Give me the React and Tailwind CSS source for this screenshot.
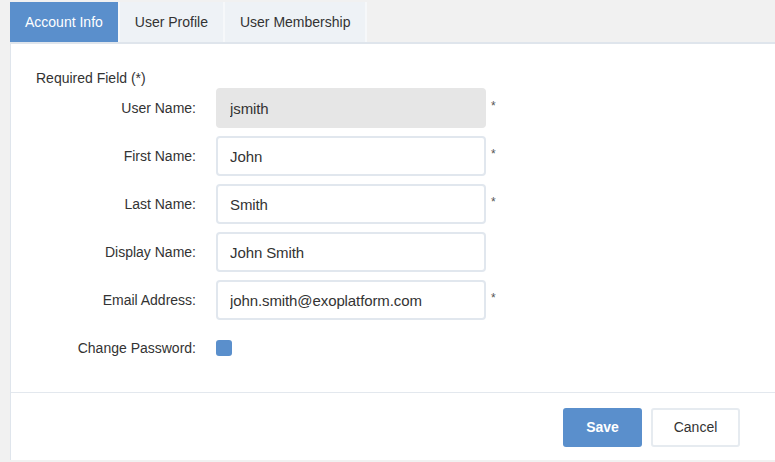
import { useState } from 'react';

const TABS = ['Account Info', 'User Profile', 'User Membership'];

const FIELDS = [
  { label: 'User Name:', value: 'jsmith', disabled: true, required: true },
  { label: 'First Name:', value: 'John', required: true },
  { label: 'Last Name:', value: 'Smith', required: true },
  { label: 'Display Name:', value: 'John Smith' },
  { label: 'Email Address:', value: 'john.smith@exoplatform.com', required: true },
];

export default function App() {
  const [active, setActive] = useState(0);

  return (
    <div className="min-h-screen bg-[#f1f1f1] pl-[10px] pt-[2px] font-['Liberation_Sans',Arial,sans-serif] text-[#333]">
      {/* Tabs */}
      <div className="flex h-[40px]">
        {TABS.map((t, i) => (
          <button
            key={t}
            onClick={() => setActive(i)}
            className={`h-full px-[15px] text-[14px] border-r-2 border-[#f6f8fa] ${
              i === active ? 'bg-[#5a8fcc] text-white border-r-0' : 'bg-[#eef2f6] text-[#333]'
            }`}
          >
            {t}
          </button>
        ))}
      </div>

      {/* Panel */}
      <div className="bg-white border-t-2 border-l border-[#dfe5ec] min-h-[418px]">
        <div className="pl-[25px] pt-[24px] pb-[24px]">
          <p className="text-[14px] leading-[20px]">Required Field (*)</p>
          <div className="flex flex-col gap-[8px]">
            {FIELDS.map(f => (
              <div key={f.label} className="flex items-center h-[40px]">
                <label className="w-[160px] text-right text-[14px]">{f.label}</label>
                <input
                  readOnly
                  value={f.value}
                  className={`ml-[20px] w-[270px] h-[40px] rounded-[4px] border-2 px-[12px] text-[15px] tracking-[-0.1px] text-[#333] outline-none ${
                    f.disabled ? 'bg-[#e6e6e6] border-[#e6e6e6]' : 'bg-white border-[#e1e7ee]'
                  }`}
                />
                {f.required && <span className="ml-[5px] -mt-[4px] text-[12px] text-[#555]">*</span>}
              </div>
            ))}
            <div className="flex items-center h-[40px]">
              <label className="w-[160px] text-right text-[14px]">Change Password:</label>
              <span className="ml-[20px] w-[16px] h-[16px] rounded-[3px] bg-[#5a8fcc]" />
            </div>
          </div>
        </div>

        <div className="border-t border-[#e3e8ee] flex justify-end gap-[9px] pt-[15px] pr-[35px]">
          <button className="w-[79px] h-[39px] rounded-[3px] bg-[#5a8fcc] text-white font-bold text-[14px]">
            Save
          </button>
          <button className="w-[89px] h-[39px] rounded-[3px] bg-white border-2 border-[#e6ebf0] text-[14px] text-[#333]">
            Cancel
          </button>
        </div>
      </div>
    </div>
  );
}
